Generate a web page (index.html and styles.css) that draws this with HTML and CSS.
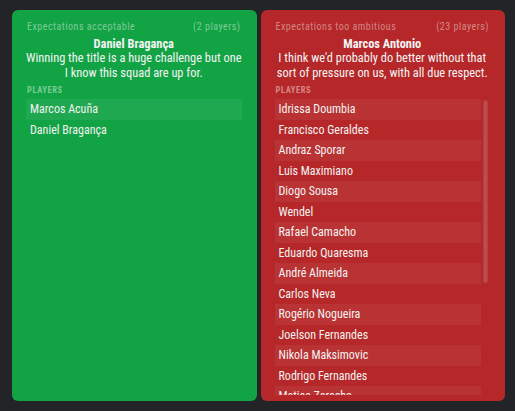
FILE: index.html
```html
<!DOCTYPE html>
<html>
<head>
<meta charset="utf-8">
<link rel="stylesheet" href="styles.css">
</head>
<body>
<div class="board">
  <section class="panel panel-green">
    <div class="panel-head"><span>Expectations acceptable</span><span>(2 players)</span></div>
    <div class="quote">
      <div class="quote-name">Daniel Bragança</div>
      <div class="quote-text">Winning the title is a huge challenge but one<br>I know this squad are up for.</div>
    </div>
    <div class="label">PLAYERS</div>
    <div class="list-wrap">
      <ul class="list">
        <li>Marcos Acuña</li>
        <li>Daniel Bragança</li>
      </ul>
    </div>
  </section>
  <section class="panel panel-red">
    <div class="panel-head"><span>Expectations too ambitious</span><span>(23 players)</span></div>
    <div class="quote">
      <div class="quote-name">Marcos Antonio</div>
      <div class="quote-text">I think we'd probably do better without that<br>sort of pressure on us, with all due respect.</div>
    </div>
    <div class="label">PLAYERS</div>
    <div class="list-wrap">
      <ul class="list">
        <li>Idrissa Doumbia</li>
        <li>Francisco Geraldes</li>
        <li>Andraz Sporar</li>
        <li>Luis Maximiano</li>
        <li>Diogo Sousa</li>
        <li>Wendel</li>
        <li>Rafael Camacho</li>
        <li>Eduardo Quaresma</li>
        <li>André Almeida</li>
        <li>Carlos Neva</li>
        <li>Rogério Nogueira</li>
        <li>Joelson Fernandes</li>
        <li>Nikola Maksimovic</li>
        <li>Rodrigo Fernandes</li>
        <li>Matias Zaracho</li>
        <li>Jovane Cabral</li>
        <li>Gonzalo Plata</li>
        <li>Tiago Tomás</li>
        <li>Pedro Marques</li>
        <li>Nuno Mendes</li>
        <li>Luciano Vietto</li>
        <li>Zouhair Feddal</li>
        <li>Luís Neto</li>
      </ul>
      <div class="scroll-track"><div class="scroll-thumb"></div></div>
    </div>
  </section>
</div>
</body>
</html>
```
FILE: styles.css
```css
html, body {
  margin: 0;
  padding: 0;
  background: #232428;
}
body {
  font-family: "Liberation Sans Narrow", "Roboto Condensed", "Liberation Sans", sans-serif;
  color: #f2f2f2;
}
.board {
  box-sizing: border-box;
  width: 515px;
  height: 411px;
  padding: 10px 10px 10px 12px;
  display: flex;
  gap: 4px;
}
.panel {
  flex: 1;
  min-width: 0;
  border-radius: 6px;
  padding: 9px 15px 6px 14px;
  display: flex;
  flex-direction: column;
}
.panel-green { background: #12a345; }
.panel-red { background: #b52728; }
.panel-head {
  display: flex;
  justify-content: space-between;
  font-size: 10px;
  line-height: 12px;
  height: 12px;
  padding: 2px 1px 0 1px;
  letter-spacing: 0.5px;
  color: rgba(255, 255, 255, 0.45);
}
.quote {
  margin-top: 4px;
  text-align: center;
  font-size: 12.4px;
  color: #f4f4f4;
  white-space: nowrap;
}
.quote-name {
  font-weight: bold;
  line-height: 13px;
}
.quote-text {
  line-height: 15px;
}
.label {
  margin-top: 5px;
  padding-left: 1px;
  font-size: 8.5px;
  line-height: 10px;
  font-weight: bold;
  letter-spacing: 0.6px;
  color: rgba(255, 255, 255, 0.45);
}
.list-wrap {
  margin-top: 4px;
  flex: 1;
  min-height: 0;
  display: flex;
}
.list {
  list-style: none;
  margin: 0;
  padding: 0;
  flex: 1;
  min-width: 0;
  overflow: hidden;
}
.list li {
  height: 20.5px;
  line-height: 20.5px;
  padding-left: 4px;
  font-size: 12px;
  color: #f2f2f2;
  white-space: nowrap;
  overflow: hidden;
}
.list li:nth-child(odd) {
  background: rgba(255, 255, 255, 0.06);
}
.scroll-track {
  width: 9px;
  flex: none;
  padding: 1px 2px 0 2px;
  box-sizing: border-box;
}
.scroll-thumb {
  height: 183px;
  border-radius: 3px;
  background: rgba(255, 255, 255, 0.17);
  box-shadow: inset 0 0 0 1px rgba(0, 0, 0, 0.1);
}
```
